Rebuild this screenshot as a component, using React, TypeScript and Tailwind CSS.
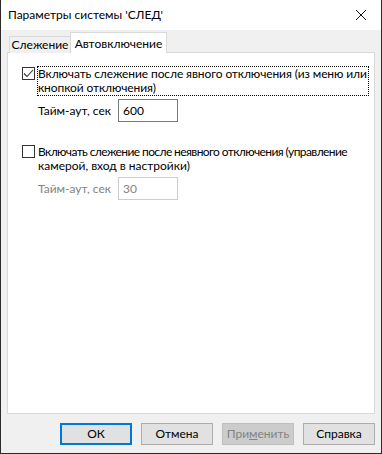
import React from "react";

const font = { fontFamily: 'Lato, "Liberation Sans", Arial, sans-serif' };

function CheckBox({ checked }: { checked: boolean }) {
  return (
    <div className="w-[13px] h-[13px] border border-[#333333] bg-white shrink-0 flex items-center justify-center">
      {checked && (
        <svg width="11" height="11" viewBox="0 0 11 11">
          <path d="M1 5.5 L4 8.5 L10 2" fill="none" stroke="#333333" strokeWidth="1.1" />
        </svg>
      )}
    </div>
  );
}

export default function App() {
  return (
    <div
      className="w-[382px] h-[454px] bg-[#f0f0f0] border-x border-b border-[#2b2b2b] flex flex-col text-[12px] text-black"
      style={font}
    >
      <div className="h-[30px] bg-white flex items-center justify-between pl-[7px] pr-[14px] shrink-0">
        <span className="text-[12px]">Параметры системы 'СЛЕД'</span>
        <svg width="12" height="12" viewBox="0 0 12 12">
          <path d="M1 1 L11 11 M11 1 L1 11" stroke="#111" strokeWidth="1" />
        </svg>
      </div>
      <div className="flex flex-col px-[6px] pt-[3px] flex-1">
        <div className="flex items-end h-[20px] pl-[2px] relative z-10 -mb-px">
          <div className="w-[61px] h-[17px] border border-[#d9d9d9] border-r-0 border-b-0 bg-[#f0f0f0] flex items-center justify-center">
            Слежение
          </div>
          <div className="w-[97px] h-[21px] border border-[#d9d9d9] border-b-0 bg-white flex items-start justify-center pt-[2px]">
            Автовключение
          </div>
        </div>
        <div className="h-[362px] border border-[#d9d9d9] bg-white pt-[13px] pl-[14px] pr-[8px]">
          <div className="flex items-start gap-[2px]">
            <div className="pt-[1px]">
              <CheckBox checked={true} />
            </div>
            <div className="border border-dotted border-black leading-[14px] pr-[1px] whitespace-nowrap tracking-[-0.1px]">
              Включать слежение после явного отключения (из меню или
              <br />
              кнопкой отключения)
            </div>
          </div>
          <div className="flex items-center mt-[3px] pl-[16px]">
            <span className="w-[80px]">Тайм-аут, сек</span>
            <div className="w-[60px] h-[23px] border border-[#7a7a7a] flex items-center pl-[4px]">600</div>
          </div>
          <div className="flex items-start gap-[2px] mt-[22px]">
            <div className="pt-[1px]">
              <CheckBox checked={false} />
            </div>
            <div className="border border-transparent leading-[14px] pr-[2px] whitespace-nowrap">
              <div className="tracking-[-0.6px]">
                Включать слежение после неявного отключения (управление
              </div>
              <div>камерой, вход в настройки)</div>
            </div>
          </div>
          <div className="flex items-center mt-[3px] pl-[16px] text-[#838383]">
            <span className="w-[80px]">Тайм-аут, сек</span>
            <div className="w-[60px] h-[23px] border border-[#cccccc] flex items-center pl-[4px]">30</div>
          </div>
        </div>
        <div className="flex justify-end gap-[9px] mt-[9px]">
          <button className="w-[72px] h-[22px] border-2 border-[#0078d7] bg-[#e1e1e1]">ОК</button>
          <button className="w-[72px] h-[22px] border border-[#adadad] bg-[#e1e1e1]">Отмена</button>
          <button className="w-[72px] h-[22px] border border-[#bfbfbf] bg-[#cccccc] text-[#838383]">
            При<span className="underline">м</span>енить
          </button>
          <button className="w-[72px] h-[22px] border border-[#adadad] bg-[#e1e1e1]">Справка</button>
        </div>
      </div>
    </div>
  );
}
